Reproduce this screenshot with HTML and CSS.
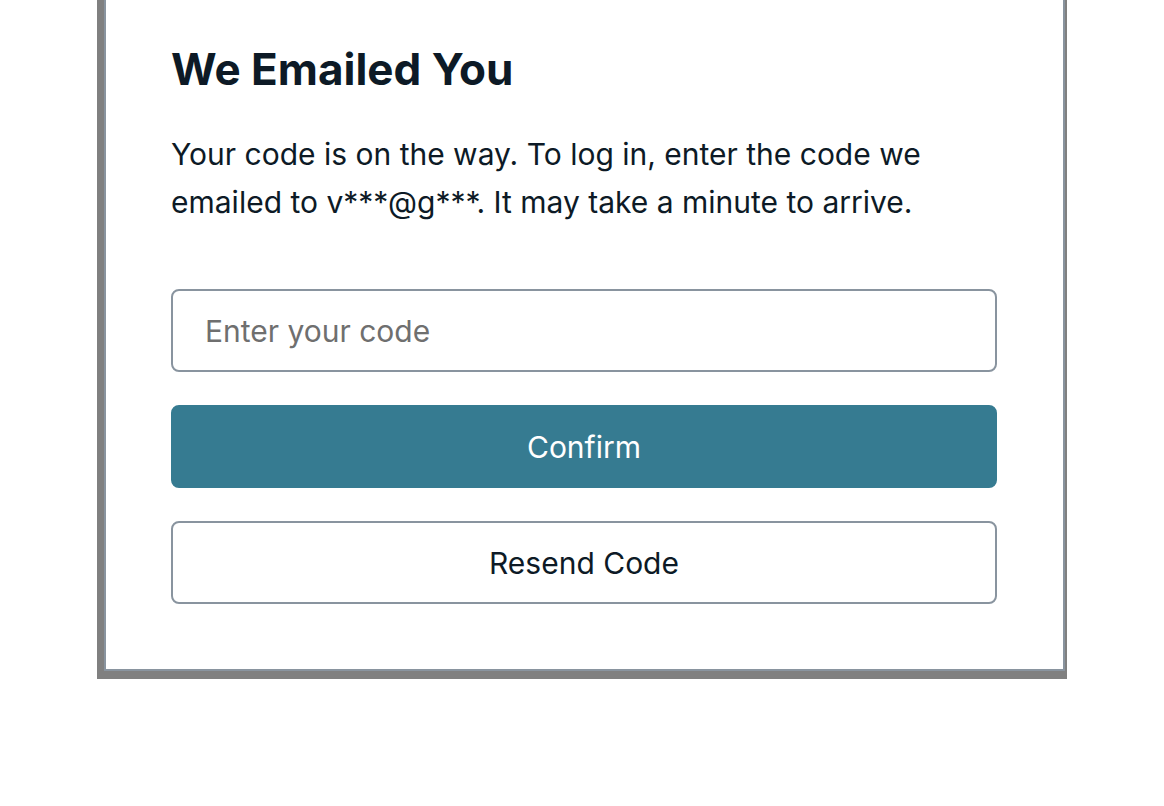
FILE: index.html
```html
<!DOCTYPE html>
<html lang="en">
<head>
<meta charset="utf-8">
<title>We Emailed You</title>
<link rel="stylesheet" href="styles.css">
</head>
<body>
<div class="frame">
  <div class="card">
    <h3 class="heading">We Emailed You</h3>
    <p class="message">Your code is on the way. To log in, enter the code we emailed to v***@g***. It may take a minute to arrive.</p>
    <form class="form">
      <input class="code-input" type="text" placeholder="Enter your code">
      <button class="btn btn-primary" type="button">Confirm</button>
      <button class="btn btn-secondary" type="button">Resend Code</button>
    </form>
  </div>
</div>
</body>
</html>
```
FILE: styles.css
```css
html, body {
  margin: 0;
  padding: 0;
  background: #ffffff;
  min-height: 806px;
}
body {
  font-family: Inter, "Noto Sans", sans-serif;
  color: #0d1a26;
}
.frame {
  box-sizing: border-box;
  width: 970px;
  margin-left: 97px;
  padding: 0 2px 8px 7px;
  background: #808080;
}
.card {
  box-sizing: border-box;
  width: 961px;
  padding: 42px 66px 65px 65px;
  border: 2px solid #89949f;
  border-top: 0;
  background: #fff;
}
.heading {
  margin: 0;
  font-size: 44px;
  line-height: 55px;
  font-weight: 700;
  color: #0d1a26;
}
.message {
  margin: 33px 0 0;
  font-size: 30px;
  line-height: 48px;
  color: #0d1a26;
}
.form {
  display: flex;
  flex-direction: column;
  gap: 33px;
  margin-top: 63px;
}
.code-input {
  box-sizing: border-box;
  height: 83px;
  width: 100%;
  padding: 0 32px;
  border: 2px solid #89949f;
  border-radius: 8px;
  font-family: inherit;
  font-size: 30px;
  color: #0d1a26;
  outline: none;
}
.code-input::placeholder {
  color: #6f6f6f;
}
.btn {
  box-sizing: border-box;
  height: 83px;
  width: 100%;
  border-radius: 8px;
  font-family: inherit;
  font-size: 30px;
  cursor: pointer;
}
.btn-primary {
  background: #367b91;
  border: 2px solid #367b91;
  color: #fff;
}
.btn-secondary {
  background: #fff;
  border: 2px solid #89949f;
  color: #0d1a26;
}
```
